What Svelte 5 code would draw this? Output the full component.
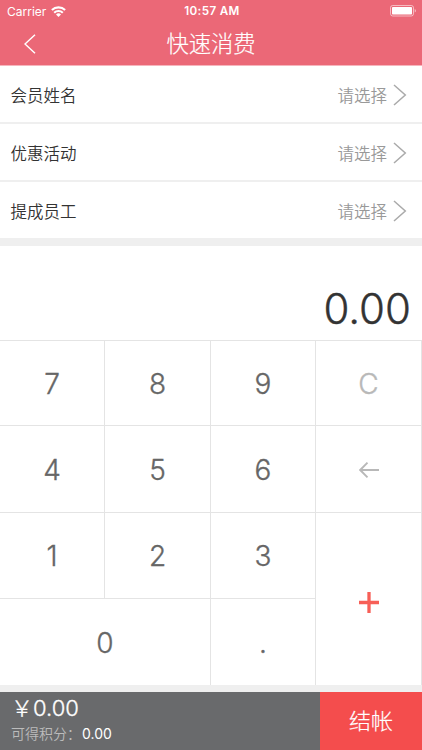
<script lang="ts">
  const fields = ['会员姓名', '优惠活动', '提成员工'];
  const keys = [
    { label: '7', type: 'digit' },
    { label: '8', type: 'digit' },
    { label: '9', type: 'digit' },
    { label: 'C', type: 'clear' },
    { label: '4', type: 'digit' },
    { label: '5', type: 'digit' },
    { label: '6', type: 'digit' },
    { label: 'back', type: 'back' },
    { label: '1', type: 'digit' },
    { label: '2', type: 'digit' },
    { label: '3', type: 'digit' },
    { label: 'plus', type: 'plus' },
    { label: '0', type: 'zero' },
    { label: '.', type: 'digit' }
  ];

  let entry = $state('');
  let total = $state(0);

  const current = $derived(Number(entry || 0).toFixed(2));
  const sum = $derived((total + Number(entry || 0)).toFixed(2));

  function press(type: string, label: string) {
    if (type === 'clear') {
      entry = '';
      total = 0;
    } else if (type === 'back') {
      entry = entry.slice(0, -1);
    } else if (type === 'plus') {
      total += Number(entry || 0);
      entry = '';
    } else if (entry.length < 8 && !(label === '.' && entry.includes('.'))) {
      entry += label;
    }
  }
</script>

<main class="screen">
  <header>
    <div class="status">
      <div class="carrier">
        <span>Carrier</span>
        <svg width="15" height="11" viewBox="0 0 15 11" fill="none" stroke="#fff" stroke-width="2.1">
          <path d="M.9 4.1a9.4 9.4 0 0 1 13.2 0M3.2 6.7a6.1 6.1 0 0 1 8.6 0" />
          <path d="M5 8.4a3.6 3.6 0 0 1 5 0L7.5 11z" fill="#fff" stroke="none" />
        </svg>
      </div>
      <time>10:57 AM</time>
      <svg class="battery" width="27" height="12" viewBox="0 0 27 12">
        <rect x=".5" y=".5" width="23" height="10.5" rx="2.2" fill="none" stroke="#fff" stroke-opacity=".55" />
        <rect x="2" y="2" width="20" height="7.5" rx=".8" fill="#fff" />
        <path d="M24.7 4v3.6q1.3-.5 1.3-1.8t-1.3-1.8z" fill="#fff" fill-opacity=".55" />
      </svg>
    </div>
    <div class="navbar">
      <button class="return" type="button" aria-label="返回">
        <svg width="12" height="20" viewBox="0 0 12 20" fill="none" stroke="#fff" stroke-width="1.5">
          <path d="M11 .7 1 10l10 9.3" />
        </svg>
      </button>
      <h1>快速消费</h1>
    </div>
  </header>

  <section class="fields">
    {#each fields as field}
      <button class="field" type="button">
        <span>{field}</span>
        <span class="choose">请选择</span>
        <svg width="14" height="22" viewBox="0 0 14 22" fill="none" stroke="#aaa" stroke-width="1.5">
          <path d="M1 1l11.3 10L1 21" />
        </svg>
      </button>
    {/each}
  </section>

  <output class="amount">{current}</output>

  <section class="keypad">
    {#each keys as key}
      <button class={['key', key.type]} type="button" aria-label={key.label} onclick={() => press(key.type, key.label)}>
        {#if key.type === 'back'}
          <svg width="20" height="16" viewBox="0 0 20 16" fill="none" stroke="#b8b8b8" stroke-width="1.9">
            <path d="M20 8H1.5M8.5.7 1.2 8l7.3 7.3" />
          </svg>
        {:else if key.type === 'plus'}
          <svg width="20" height="21" viewBox="0 0 20 21" fill="none" stroke="#f75f57" stroke-width="3.3">
            <path d="M0 10.5h20M10 0v21" />
          </svg>
        {:else}
          {key.label}
        {/if}
      </button>
    {/each}
  </section>

  <footer>
    <div class="summary">
      <div class="sum"><span class="yen">￥</span>{sum}</div>
      <div class="points">可得积分：<b>0.00</b></div>
    </div>
    <button class="checkout" type="button">结帐</button>
  </footer>
</main>

<style>
  :global(body) {
    margin: 0;
  }

  .screen {
    display: flex;
    flex-direction: column;
    width: 422px;
    height: 750px;
    overflow: hidden;
    background: #efefef;
    color: #333;
    font-family: Inter, 'Noto Sans CJK SC', sans-serif;
  }

  button {
    margin: 0;
    padding: 0;
    border: 0;
    background: none;
    color: inherit;
    font: inherit;
  }

  svg {
    display: block;
  }

  header {
    box-sizing: border-box;
    height: 66px;
    border-bottom: 1px solid #f6b5bd;
    background: #eb6877;
    color: #fff;
  }

  .status {
    display: grid;
    grid-template-columns: 1fr auto 1fr;
    align-items: center;
    height: 22px;
    padding: 0 5px 0 7px;
  }

  .carrier {
    display: flex;
    align-items: center;
    gap: 5px;
    font-size: 12px;
  }

  time {
    font-size: 11.7px;
    font-weight: 600;
    letter-spacing: 0.35px;
  }

  .battery {
    justify-self: end;
  }

  .navbar {
    display: grid;
    grid-template-columns: 60px 1fr 60px;
    align-items: center;
    height: 42px;
  }

  .return {
    justify-self: center;
  }

  h1 {
    margin: 0;
    font-size: 22.3px;
    font-weight: 300;
    line-height: 43px;
    text-align: center;
    -webkit-text-stroke: 0.2px;
  }

  .fields {
    margin-bottom: 7px;
  }

  .field {
    display: flex;
    align-items: center;
    box-sizing: border-box;
    width: 100%;
    height: 58px;
    padding: 1px 15px 0 10.5px;
    border-bottom: 2px solid #efefef;
    background: #fff;
    font-size: 16.5px;
    font-weight: 350;
  }

  .field:last-child {
    height: 57px;
    border-bottom-width: 1px;
  }

  .choose {
    margin-left: auto;
    margin-right: 6px;
    color: #999;
  }

  .amount {
    box-sizing: border-box;
    height: 94px;
    padding: 37px 11px 0 0;
    background: #fff;
    font-size: 42px;
    font-weight: 300;
    line-height: 52px;
    text-align: right;
    -webkit-text-stroke: 0.4px;
  }

  .keypad {
    display: grid;
    grid-template-columns: 105px 106px 105px 106px;
    grid-template-rows: 85px 87px 86px 87px;
    height: 345px;
    color: #666;
    font-size: 28px;
    font-weight: 300;
    -webkit-text-stroke: 0.35px;
  }

  .key {
    display: flex;
    align-items: center;
    justify-content: center;
    padding-top: 1px;
    border-top: 1px solid #e4e4e4;
    border-right: 1px solid #e4e4e4;
    background: #fff;
  }

  .clear {
    color: #b8b8b8;
  }

  .plus {
    grid-row: 3 / 5;
    grid-column: 4;
    padding-top: 6px;
  }

  .zero {
    grid-column: 1 / 3;
  }

  footer {
    display: flex;
    height: 58px;
    margin-top: auto;
    color: #fff;
  }

  .summary {
    flex: 1;
    padding-left: 11px;
    background: #696a6c;
  }

  .sum {
    height: 32px;
    font-size: 22px;
    font-weight: 300;
    line-height: 33px;
    -webkit-text-stroke: 0.3px;
  }

  .points {
    color: #bcbcbc;
    font-size: 14px;
    font-weight: 350;
    line-height: 19px;
  }

  .points b {
    margin-left: 1px;
    color: #fff;
    font-weight: 400;
  }

  .checkout {
    width: 102px;
    padding-bottom: 4px;
    background: #f44d4d;
    font-size: 22px;
    font-weight: 300;
    -webkit-text-stroke: 0.2px;
  }
</style>
